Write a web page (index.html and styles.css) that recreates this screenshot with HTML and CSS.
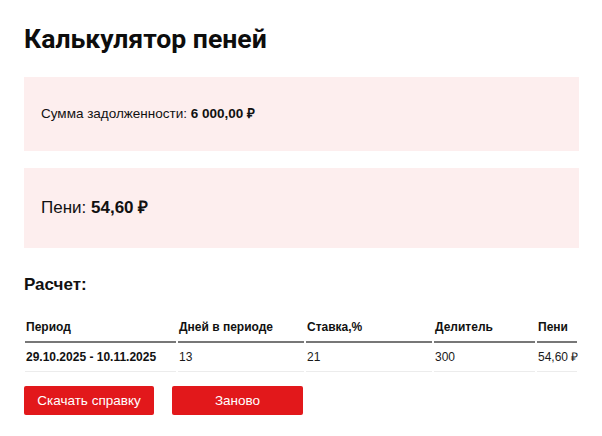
FILE: index.html
```html
<!DOCTYPE html>
<html lang="ru">
<head>
<meta charset="utf-8">
<title>Калькулятор пеней</title>
<link rel="stylesheet" href="styles.css">
</head>
<body>
<div class="page">
  <h1 class="title">Калькулятор пеней</h1>
  <div class="box box-sum">Сумма задолженности: <b>6 000,00 ₽</b></div>
  <div class="box box-fine">Пени: <b>54,60 ₽</b></div>
  <h2 class="subtitle">Расчет:</h2>
  <table class="calc">
    <thead>
      <tr>
        <th class="c-period">Период</th>
        <th class="c-days">Дней в периоде</th>
        <th class="c-rate">Ставка,%</th>
        <th class="c-div">Делитель</th>
        <th class="c-fine">Пени</th>
      </tr>
    </thead>
    <tbody>
      <tr>
        <td class="c-period strong">29.10.2025 - 10.11.2025</td>
        <td>13</td>
        <td>21</td>
        <td>300</td>
        <td>54,60 ₽</td>
      </tr>
    </tbody>
  </table>
  <div class="actions">
    <button class="btn btn-download">Скачать справку</button>
    <button class="btn btn-reset">Заново</button>
  </div>
</div>
</body>
</html>
```

FILE: styles.css
```css
html, body {
  margin: 0;
  padding: 0;
  background: #ffffff;
}
body {
  font-family: "Liberation Sans", Arial, sans-serif;
  color: #111111;
}
.page {
  padding: 0 23px 0 24px;
}
.title {
  font-family: Roboto, "Noto Sans", sans-serif;
  font-weight: 700;
  font-size: 26.6px;
  line-height: 35px;
  margin: 21px 0 21px;
  color: #0d0d0d;
}
.box {
  background: #fdeeee;
  padding-left: 17px;
}
.box-sum {
  font-size: 13.5px;
  line-height: 20px;
  padding-top: 27px;
  padding-bottom: 27px;
}
.box-fine {
  margin-top: 17px;
  font-size: 17px;
  line-height: 22px;
  padding-top: 29px;
  padding-bottom: 29px;
}
.subtitle {
  font-size: 17px;
  line-height: 20px;
  font-weight: 700;
  margin: 27px 0 18px;
}
.calc {
  border-collapse: separate;
  border-spacing: 2px 0;
  margin-left: -1px;
  table-layout: fixed;
  width: 556px;
  font-size: 12px;
}
.calc th, .calc td {
  text-align: left;
  padding: 7px 1px;
  line-height: 14px;
  white-space: nowrap;
}
.calc th {
  font-weight: 700;
  border-bottom: 2px solid #777777;
}
.calc td {
  border-bottom: 1px solid #ececec;
  color: #1a1a1a;
}
.calc td.strong {
  font-weight: 700;
  color: #111111;
}
.c-period { width: 149px; }
.c-days { width: 124px; }
.c-rate { width: 124px; }
.c-div { width: 99px; }
.c-fine { width: 38px; }
.actions {
  display: flex;
  gap: 18px;
  margin-top: 14px;
}
.btn {
  font-family: "Liberation Sans", Arial, sans-serif;
  font-size: 13.5px;
  color: #ffffff;
  background: #e2181b;
  border: none;
  border-radius: 2px;
  height: 29px;
  padding: 0;
  cursor: pointer;
}
.btn-download { width: 130px; }
.btn-reset { width: 131px; }
```
